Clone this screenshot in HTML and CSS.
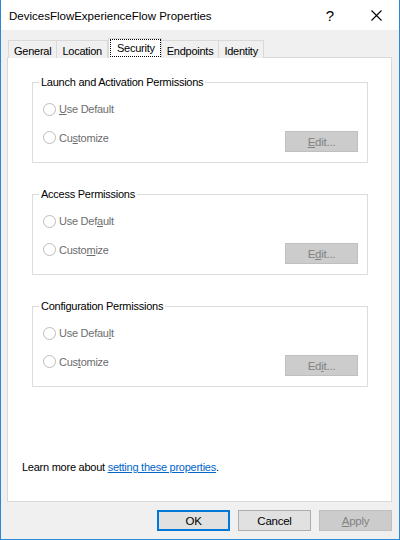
FILE: index.html
```html
<!DOCTYPE html>
<html>
<head>
<meta charset="utf-8">
<link rel="stylesheet" href="styles.css">
</head>
<body>
<div class="window">
  <div class="titlebar">
    <div class="title">DevicesFlowExperienceFlow Properties</div>
    <div class="cap help">?</div>
    <div class="cap close">
      <svg width="11" height="11" viewBox="0 0 11 11"><path d="M0.5 0.5 L10.5 10.5 M10.5 0.5 L0.5 10.5" stroke="#000" stroke-width="1.1" fill="none"/></svg>
    </div>
  </div>
  <div class="body">
    <div class="tabs">
      <div class="tab">General</div>
      <div class="tab">Location</div>
      <div class="tab active"><span class="focus">Security</span></div>
      <div class="tab">Endpoints</div>
      <div class="tab">Identity</div>
    </div>
    <div class="panel">
      <fieldset class="group">
        <legend>Launch and Activation Permissions</legend>
        <div class="group-inner">
          <div class="row"><span class="radio"></span><span class="lbl"><u>U</u>se Default</span></div>
          <div class="row row2"><span class="radio"></span><span class="lbl">Cu<u>s</u>tomize</span><span class="btn disabled edit"><u>E</u>dit...</span></div>
        </div>
      </fieldset>
      <fieldset class="group">
        <legend>Access Permissions</legend>
        <div class="group-inner">
          <div class="row"><span class="radio"></span><span class="lbl">Use Def<u>a</u>ult</span></div>
          <div class="row row2"><span class="radio"></span><span class="lbl">Custo<u>m</u>ize</span><span class="btn disabled edit">E<u>d</u>it...</span></div>
        </div>
      </fieldset>
      <fieldset class="group">
        <legend>Configuration Permissions</legend>
        <div class="group-inner">
          <div class="row"><span class="radio"></span><span class="lbl">Use Defau<u>l</u>t</span></div>
          <div class="row row2"><span class="radio"></span><span class="lbl">Cus<u>t</u>omize</span><span class="btn disabled edit">Ed<u>i</u>t...</span></div>
        </div>
      </fieldset>
      <div class="learn">Learn more about <a href="#">setting these properties</a>.</div>
    </div>
    <div class="buttons">
      <span class="btn default">OK</span>
      <span class="btn">Cancel</span>
      <span class="btn disabled"><u>A</u>pply</span>
    </div>
  </div>
</div>
</body>
</html>
```

FILE: styles.css
```css
* { box-sizing: border-box; }
html, body { margin: 0; padding: 0; }
body {
  width: 400px;
  height: 540px;
  font-family: "Liberation Sans", Arial, sans-serif;
  font-size: 11px;
  letter-spacing: -0.25px;
  color: #000;
  overflow: hidden;
}
.window {
  width: 400px;
  height: 540px;
  border: 1px solid #2b87d3;
  border-top: none;
  display: flex;
  flex-direction: column;
  background: #fff;
}
.titlebar {
  height: 30px;
  display: flex;
  align-items: center;
  background: #fff;
}
.title {
  flex: 1;
  padding-left: 8px;
  font-size: 11.5px;
  letter-spacing: 0;
  padding-top: 1px;
}
.cap {
  width: 46px;
  height: 30px;
  display: flex;
  align-items: center;
  justify-content: center;
}
.help { font-size: 15px; padding-top: 1px; letter-spacing: 0; }
.close svg { display: block; }
.body {
  flex: 1;
  background: #f0f0f0;
  padding: 8px 7px 0 6px;
  display: flex;
  flex-direction: column;
}
.tabs {
  display: flex;
  align-items: flex-end;
  height: 20px;
  margin-bottom: -1px;
  padding-left: 1px;
  position: relative;
  z-index: 1;
}
.tab {
  height: 18px;
  border: 1px solid #d9d9d9;
  border-bottom: none;
  margin-right: -1px;
  padding: 1px 5px 0 5px;
  line-height: 18px;
  background: #f0f0f0;
}
.tab.active {
  height: 20px;
  background: #fff;
  padding: 1px 1px 0 2px;
  line-height: 16px;
  margin-left: 1px;
  margin-right: 0;
}
.tab.active + .tab { margin-left: -1px; }
.focus {
  display: block;
  outline: 1px dotted #000;
  padding: 0 5px 0 6px;
  height: 16px;
}
.panel {
  height: 445px;
  background: #fff;
  border: 1px solid #d9d9d9;
  padding: 16px 23px 26px 24px;
  display: flex;
  flex-direction: column;
}
.group {
  margin: 0 0 23px 0;
  padding: 0;
  border: 1px solid #dcdcdc;
  min-width: 0;
}
.group legend {
  margin-left: 6px;
  padding: 0 2px;
  line-height: 16px;
}
.group-inner {
  padding: 9px 9px 10px 10px;
}
.row {
  display: flex;
  align-items: center;
  height: 20px;
  color: #6d6d6d;
}
.row2 {
  margin-top: 9px;
  align-items: flex-start;
  height: 24px;
}
.row2 .radio { margin-top: 3px; }
.row2 .lbl { line-height: 20px; }
.radio {
  width: 13px;
  height: 13px;
  border-radius: 50%;
  border: 1px solid #bcbcbc;
  background: #fff;
  margin-right: 3px;
  flex: none;
}
.lbl u, .btn u { text-decoration: underline; text-underline-offset: 1px; }
.edit {
  margin-left: auto;
  margin-top: 3px;
}
.btn {
  width: 73px;
  height: 21px;
  display: flex;
  align-items: center;
  justify-content: center;
  background: #e1e1e1;
  border: 1px solid #adadad;
  color: #000;
  font-size: 11.5px;
}
.btn.disabled {
  background: #cccccc;
  border-color: #bfbfbf;
  color: #838383;
}
.btn.default {
  border: 1px solid #0078d7;
  box-shadow: inset 0 0 0 1px #0078d7;
}
.learn {
  margin-top: auto;
  padding-left: 14px;
  line-height: 16px;
  margin-left: -24px;
}
.learn a { color: #0066cc; text-decoration: underline; }
.buttons {
  display: flex;
  justify-content: flex-end;
  gap: 8px;
  margin-top: 8px;
}
```
